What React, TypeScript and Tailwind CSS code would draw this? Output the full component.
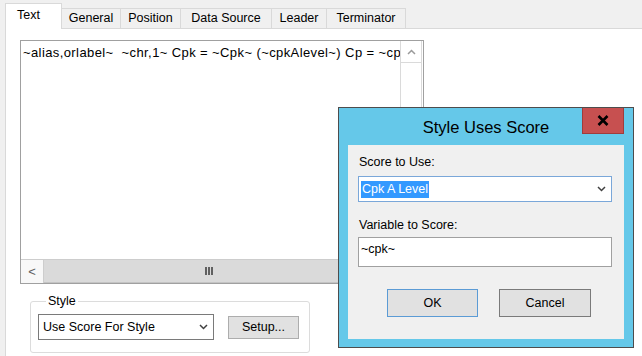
const Chevron = ({ up = false }: { up?: boolean }) => (
  <svg width="9" height="6" viewBox="0 0 9 6" className="block">
    <polyline
      points={up ? '1,5 4.5,1.5 8,5' : '1,1 4.5,4.5 8,1'}
      fill="none"
      stroke={up ? '#9a9a9a' : '#404040'}
      strokeWidth="1.5"
    />
  </svg>
);

const tabs = [
  { label: 'General', w: 'w-[59px]' },
  { label: 'Position', w: 'w-[60px]' },
  { label: 'Data Source', w: 'w-[91px]' },
  { label: 'Leader', w: 'w-[55px]' },
  { label: 'Terminator', w: 'w-[79px]' },
];

const App = () => {
  return (
    <div className="relative w-[642px] h-[356px] overflow-hidden bg-[#f0f0f0] text-[12.5px] text-black font-['Liberation_Sans',Arial,sans-serif] leading-[15px]">
      {/* Tab strip */}
      <div className="flex items-end h-[28px] pl-[5px]">
        <div className="relative z-10 -mb-px h-[26px] w-[57px] bg-white border border-b-0 border-[#d9d9d9] pl-[11px] pt-[4px]">
          Text
        </div>
        {tabs.map((tab) => (
          <div
            key={tab.label}
            className={`${tab.w} h-[20px] flex justify-center pt-[2px] border-t border-r border-[#d9d9d9] bg-[#f0f0f0]`}
          >
            {tab.label}
          </div>
        ))}
      </div>

      {/* Panel */}
      <div className="ml-[5px] h-[328px] bg-white border-l border-t border-[#d9d9d9] pl-[14px] pt-[11px]">
        {/* Text box */}
        <div className="flex flex-col w-[404px] h-[244px] border border-[#a0a0a0]">
          <div className="flex flex-1">
            <div className="flex-1 overflow-hidden whitespace-pre pl-[2px] pt-[4px] text-[13px] tracking-[0.4px]">
              ~alias,orlabel~  ~chr,1~ Cpk = ~Cpk~ (~cpkAlevel~) Cp = ~cp~
            </div>
            <div className="w-[22px] mr-px flex flex-col border-l border-r border-[#dadada] bg-white">
              <div className="h-[22px] flex items-center justify-center border-b border-[#dadada]">
                <Chevron up />
              </div>
            </div>
          </div>
          <div className="flex h-[24px] bg-[#dadada] border-t border-[#cdcdcd]">
            <div className="w-[23px] flex items-center justify-center bg-[#f8f8f8] border-r border-[#cdcdcd] text-[#606060] text-[13px]">
              &lt;
            </div>
            <div className="w-[330px] flex items-center justify-center border-b border-[#c4c4c4] bg-[#dadada]">
              <div className="flex gap-[1px]">
                <div className="w-[2px] h-[8px] bg-[#606060]" />
                <div className="w-[2px] h-[8px] bg-[#606060]" />
                <div className="w-[2px] h-[8px] bg-[#606060]" />
              </div>
            </div>
          </div>
        </div>

        {/* Style group */}
        <fieldset className="mt-[10px] ml-[10px] w-[280px] h-[59px] border border-[#dcdcdc] rounded-[3px] pl-[7px] pt-[5px]">
          <legend className="ml-[8px] px-[2px]">Style</legend>
          <div className="flex items-center gap-[14px]">
            <div className="w-[176px] h-[26px] flex items-center justify-between border border-[#7a7a7a] bg-white pl-[4px] pr-[5px]">
              <span>Use Score For Style</span>
              <Chevron />
            </div>
            <div className="w-[71px] h-[23px] flex items-center justify-center border border-[#adadad] bg-[#e1e1e1]">
              Setup...
            </div>
          </div>
        </fieldset>
      </div>

      {/* Dialog */}
      <div className="absolute left-[338px] top-[107px] w-[296px] h-[241px] flex flex-col border border-[#4d4d4d] bg-[#65c8e9] px-[9px] pb-[8px]">
        <div className="relative h-[37px] flex items-center justify-center">
          <span className="text-[16.5px] leading-[19px] pt-[2px]">Style Uses Score</span>
          <div className="absolute right-0 top-0 w-[42px] h-[26px] flex items-center justify-center bg-[#c75050] border border-[#a03c3c] border-t-0">
            <svg width="12" height="11" viewBox="0 0 12 11">
              <path d="M1.5 1 L10.5 10 M10.5 1 L1.5 10" stroke="#000" strokeWidth="2.6" />
            </svg>
          </div>
        </div>
        <div className="flex-1 bg-[#f0f0f0] pl-[10px] pt-[10px]">
          <div className="pl-px">Score to Use:</div>
          <div className="mt-[6px] w-[254px] h-[26px] flex items-center justify-between border border-[#7aa7d9] bg-white pl-[2px] pr-[5px]">
            <span className="bg-[#3399ff] text-white px-px leading-[17px]">Cpk A Level</span>
            <Chevron />
          </div>
          <div className="mt-[16px] pl-px">Variable to Score:</div>
          <div className="mt-[4px] w-[254px] h-[30px] border border-[#a0a0a0] bg-white pl-[2px] pt-[4px]">
            ~cpk~
          </div>
          <div className="flex gap-[21px] mt-[22px] pl-[29px]">
            <div className="w-[91px] h-[28px] flex items-center justify-center border border-[#5b9bd5] bg-[#e1e1e1]">
              OK
            </div>
            <div className="w-[92px] h-[28px] flex items-center justify-center border border-[#7a7a7a] bg-[#e1e1e1]">
              Cancel
            </div>
          </div>
        </div>
      </div>
    </div>
  );
};

export default App;
